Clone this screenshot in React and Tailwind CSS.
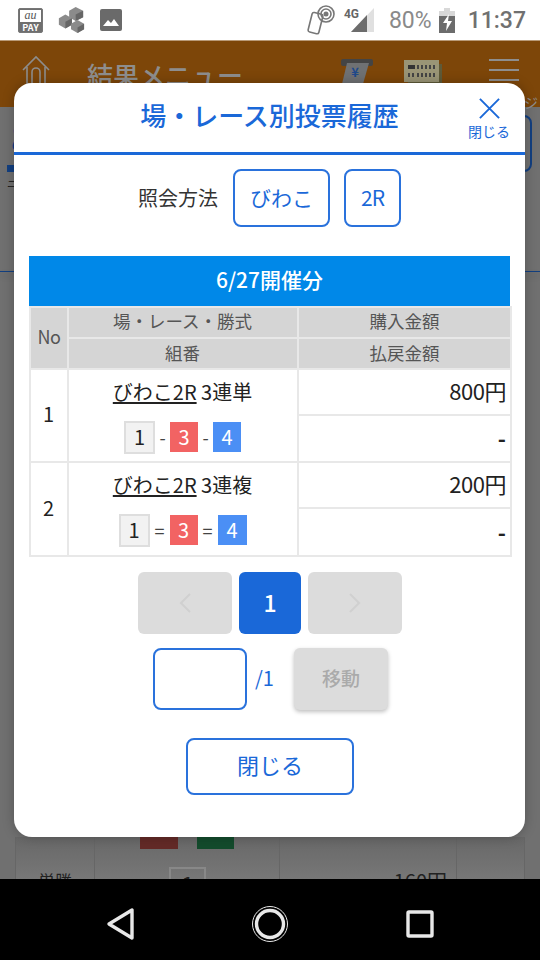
function Combo({ sep, gap1, blueW }) {
  return (
    <div className="flex items-center justify-center h-[34px]">
      <span className="flex items-center justify-center h-[33px] w-[31px] bg-[#f2f2f2] border-2 border-[#dedede] text-[20px] text-[#222]">1</span>
      <span className={`${gap1} text-center text-[18px] text-[#444]`}>{sep}</span>
      <span className="flex items-center justify-center h-[30px] w-[28px] bg-[#f26363] text-white text-[20px]">3</span>
      <span className={`${gap1} text-center text-[18px] text-[#444]`}>{sep}</span>
      <span className={`flex items-center justify-center h-[30px] ${blueW} bg-[#4b8ff5] text-white text-[20px]`}>4</span>
    </div>
  );
}

function Row({ no, kind, amount, sep, gap1, blueW, lastH }) {
  return (
    <>
      <tr className="h-[46px]">
        <td rowSpan={2} className="border-2 border-[#e8e8e8] text-center text-[20px] text-[#222] pb-[3px] pr-[1px]">{no}</td>
        <td rowSpan={2} className="border-2 border-[#e8e8e8] text-center text-[#222] align-top pr-[1px]">
          <div className="text-[20px] leading-[26px] mt-[9px] mb-[15px]"><span className="underline underline-offset-2">びわこ2R</span> {kind}</div>
          <Combo sep={sep} gap1={gap1} blueW={blueW} />
        </td>
        <td className="border-2 border-[#e8e8e8] text-right pr-[4px] pb-[5px] text-[22px] leading-none text-[#222] tracking-[-0.5px]">{amount}</td>
      </tr>
      <tr className={lastH}>
        <td className="border-2 border-[#e8e8e8] text-right pr-[4px] pb-[2px] text-[22px] font-bold text-[#222]">-</td>
      </tr>
    </>
  );
}

function StatusBar() {
  return (
    <div className="h-[40px] bg-white flex items-center shrink-0 pl-[18px] pr-[14px]">
      <div className="w-[25px] h-[25px] rounded-[2px] bg-[#6f6f6f] flex flex-col items-center overflow-hidden border border-[#777]">
        <div className="h-[12px] w-[21px] mt-[1px] bg-white text-[#555] text-[12px] leading-[11px] italic text-center" style={{ fontFamily: '"Liberation Serif", serif' }}>au</div>
        <div className="text-white text-[9px] leading-[9px] mt-[1px] font-bold">PAY</div>
      </div>
      <svg width="28" height="30" viewBox="0 0 30 30" className="ml-[14px]">
        <path d="M20 1l8 4v7l-8 4-7-4V5z" fill="#8b8b8b" /><path d="M20 9l8-4v7l-8 4z" fill="#666" />
        <path d="M9 9l7 4v7l-7 4-7-4v-7z" fill="#8b8b8b" /><path d="M9 17l7-4v7l-7 4z" fill="#666" />
        <path d="M22 15l7 4v6l-7 4-7-4v-6z" fill="#8b8b8b" /><path d="M22 23l7-4v6l-7 4z" fill="#666" />
      </svg>
      <svg width="22" height="22" viewBox="0 0 22 22" className="ml-[15px]">
        <rect width="22" height="22" rx="2" fill="#6a6a6a" />
        <path d="M3 17l5-6 3 3 3-4 5 7z" fill="#fff" />
      </svg>
      <div className="flex-1" />
      <svg width="30" height="30" viewBox="0 0 30 30" fill="none" stroke="#777" strokeWidth="1.6">
        <rect x="4" y="8" width="11" height="20" rx="2" transform="rotate(14 9 18)" />
        <circle cx="20" cy="9" r="2.5" fill="#777" stroke="none" />
        <circle cx="20" cy="9" r="5" /><circle cx="20" cy="9" r="8" />
      </svg>
      <div className="relative w-[30px] h-[26px] ml-[8px]">
        <span className="absolute left-0 top-0 text-[12px] leading-[14px] font-bold text-[#666]" style={{ fontFamily: '"Roboto", sans-serif' }}>4G</span>
        <svg width="23" height="24" viewBox="0 0 23 24" className="absolute left-[7px] top-[1px]">
          <path d="M0 24L23 0v24z" fill="#e0e0e0" /><path d="M0 24L16 7v17z" fill="#6c6c6c" />
        </svg>
      </div>
      <span className="ml-[15px] text-[23px] leading-none text-[#8a8a8a]" style={{ fontFamily: '"Roboto", sans-serif' }}>80%</span>
      <svg width="16" height="25" viewBox="0 0 16 25" className="ml-[7px]">
        <rect x="5" y="0" width="6" height="3" fill="#d8d8d8" />
        <rect x="0" y="3" width="16" height="5" fill="#d8d8d8" />
        <rect x="0" y="8" width="16" height="17" fill="#6c6c6c" />
        <path d="M10 6L4 15h4l-1 8 6-10H9z" fill="#fff" />
      </svg>
      <span className="ml-[13px] text-[23px] leading-none text-[#707070] font-medium" style={{ fontFamily: '"Roboto", sans-serif' }}>11:37</span>
    </div>
  );
}

function PageBehind() {
  return (
    <div className="flex-1 flex flex-col min-h-0 bg-[#707070] overflow-hidden">
      <div className="relative h-[67px] shrink-0 bg-[#7d4609] border-t border-[#b99a78] flex items-center pl-[22px] pr-[21px]">
        <svg width="28" height="30" viewBox="0 0 28 30" fill="none" stroke="#8d8d8d" strokeWidth="1.6" className="mb-[9px]">
          <path d="M1 15L14 2l13 13" /><path d="M5 12v17h18V12" /><path d="M10 29V17a4 4 0 0 1 8 0v12" />
        </svg>
        <span className="ml-[37px] mt-[1px] text-[26px] leading-none text-[#8e8e8e] font-medium">結果メニュー</span>
        <div className="flex-1" />
        <svg width="34" height="28" viewBox="0 0 34 28" className="mb-[5px]">
          <rect x="1" y="1" width="32" height="7" rx="2" fill="#444" />
          <path d="M7 5h22l-6 21H2z" fill="#6f7173" />
          <text x="15" y="19" fontSize="13" fontWeight="bold" fill="#1f4a8c" textAnchor="middle">¥</text>
        </svg>
        <svg width="38" height="26" viewBox="0 0 38 26" className="ml-[30px] mb-[3px]">
          <rect x="4" y="4" width="34" height="22" fill="#5e5a38" />
          <rect x="0" y="0" width="35" height="22" fill="#9a9576" />
          <rect x="4" y="5" width="7" height="4" fill="#333" />
          <path d="M14 5v4M18 5v4M22 5v4M26 5v4M30 5v4M5 13v4M9 13v4M14 13v4M18 13v4M22 13v4M26 13v4M30 13v4" stroke="#444" strokeWidth="2" />
        </svg>
        <div className="ml-[47px] w-[30px] mb-[8px] flex flex-col gap-[8px]">
          <div className="h-[2px] bg-[#8e8e8e]" /><div className="h-[2px] bg-[#8e8e8e]" /><div className="h-[2px] bg-[#8e8e8e]" />
        </div>
        <span className="absolute right-[2px] bottom-[-2px] text-[14px] leading-none text-[#8e8e8e]">ジ</span>
      </div>
      <div className="flex justify-between h-[64px] shrink-0">
        <div className="pt-[13px] pl-[10px]">
          <div className="text-[28px] leading-[36px] text-[#123f80] font-bold">あ</div>
        </div>
        <div className="mt-[8px] mr-[8px] w-[60px] h-[57px] border-2 border-[#123f80] rounded-[8px]" />
      </div>
      <div className="pl-[7px] flex flex-col">
        <div className="w-[20px] h-[7px] bg-[#123f80] mt-[-6px]" />
        <div className="w-[20px] text-[10px] leading-[10px] text-[#111] mt-[7px]">ニ</div>
      </div>
      <div className="h-[1px] bg-[#123f80] mt-[82px] shadow-[0_4px_6px_rgba(0,0,0,0.2)]" />
      <div className="flex-1" />
      <div className="h-[42px] shrink-0 mx-[15px] flex bg-gradient-to-b from-[#686868] to-[#777] border-x border-[#666]">
        <div className="w-[79px] border-r border-[#666] flex items-end justify-center">
          <span className="text-[17px] leading-none mb-[-10px] text-[#222]">単勝</span>
        </div>
        <div className="w-[185px] border-r border-[#666] flex flex-col">
          <div className="flex gap-[19px] h-[12px] ml-[45px] shrink-0">
            <div className="w-[38px] bg-[#632a27]" />
            <div className="w-[37px] bg-[#134b2c]" />
          </div>
          <div className="mt-[18px] ml-[74px] w-[37px] h-[30px] shrink-0 border-2 border-[#888] text-center text-[18px] font-bold text-[#222]">1</div>
        </div>
        <div className="w-[177px] border-r border-[#666] flex items-end justify-end pr-[9px]">
          <span className="text-[20px] leading-none mb-[-12px] text-[#222]">160円</span>
        </div>
        <div className="flex-1" />
      </div>
    </div>
  );
}

function Modal() {
  const blue = "text-[#1a68d8]";
  const outline = "border-2 border-[#2a72dc] rounded-[8px] bg-white";
  return (
    <div className="absolute left-[14px] top-[83px] w-[511px] h-[754px] bg-white rounded-[18px] flex flex-col shadow-[0_0_12px_rgba(0,0,0,0.25)]">
      <div className="relative h-[72px] shrink-0 border-b-[3px] border-[#1a68d8] flex items-center justify-center">
        <h1 className={`text-[26px] leading-none font-medium mb-[6px] ${blue}`}>場・レース別投票履歴</h1>
        <div className={`absolute right-[14px] top-[14px] w-[44px] flex flex-col items-center ${blue}`}>
          <svg width="23" height="23" viewBox="0 0 24 24" stroke="#1a68d8" strokeWidth="2" fill="none">
            <path d="M2 2l20 20M22 2L2 22" />
          </svg>
          <span className="text-[14px] leading-none mt-[4px] whitespace-nowrap">閉じる</span>
        </div>
      </div>
      <div className="flex items-center justify-center mt-[14px] h-[58px]">
        <span className="text-[20px] text-[#333] mr-[15px]">照会方法</span>
        <div className={`w-[97px] h-[58px] flex items-center justify-center text-[21px] ${blue} ${outline}`}>びわこ</div>
        <div className={`ml-[14px] w-[57px] h-[58px] flex items-center justify-center text-[21px] tracking-[-1px] ${blue} ${outline}`}>2R</div>
      </div>
      <div className="mx-[15px] mt-[29px]">
        <div className="h-[50px] bg-[#0088e8] text-white text-[21px] font-medium flex items-center justify-center pb-[3px]">6/27開催分</div>
        <table className="w-[481px] table-fixed border-collapse">
          <colgroup><col className="w-[38px]" /><col className="w-[230px]" /><col className="w-[213px]" /></colgroup>
          <thead className="bg-[#d5d5d5] text-[#555] text-[17.5px]">
            <tr className="h-[31px]">
              <th rowSpan={2} className="border-2 border-[#e8e8e8] font-normal text-[18px] pb-[3px]"><span className="tracking-[-0.5px]">No</span></th>
              <th className="border-2 border-[#e8e8e8] font-normal pb-[3px] pr-[1px]">場・レース・勝式</th>
              <th className="border-2 border-[#e8e8e8] font-normal pb-[3px]">購入金額</th>
            </tr>
            <tr className="h-[31px]">
              <th className="border-2 border-[#e8e8e8] font-normal pb-[2px] pr-[1px]">組番</th>
              <th className="border-2 border-[#e8e8e8] font-normal pb-[2px]">払戻金額</th>
            </tr>
          </thead>
          <tbody>
            <Row no="1" kind="3連単" amount="800円" sep="-" gap1="w-[15px]" blueW="w-[28px]" lastH="h-[47px]" />
            <Row no="2" kind="3連複" amount="200円" sep="=" gap1="w-[20px]" blueW="w-[29px]" lastH="h-[48px]" />
          </tbody>
        </table>
      </div>
      <div className="flex justify-center gap-[7px] mt-[15px] ml-[1px]">
        <div className="w-[94px] h-[62px] rounded-[6px] bg-[#dcdcdc] flex items-center justify-center">
          <svg width="14" height="22" viewBox="0 0 14 22" fill="none" stroke="#d0d0d0" strokeWidth="2"><path d="M12 2L3 11l9 9" /></svg>
        </div>
        <div className="w-[62px] h-[62px] rounded-[6px] bg-[#1a68d8] text-white text-[23px] font-medium flex items-center justify-center pb-[2px]">1</div>
        <div className="w-[94px] h-[62px] rounded-[6px] bg-[#dcdcdc] flex items-center justify-center">
          <svg width="14" height="22" viewBox="0 0 14 22" fill="none" stroke="#d0d0d0" strokeWidth="2"><path d="M2 2l9 9-9 9" /></svg>
        </div>
      </div>
      <div className="flex items-center ml-[139px] mt-[14px]">
        <div className="w-[94px] h-[62px] rounded-[8px] border-2 border-[#2a72dc] bg-white" />
        <span className={`ml-[8px] w-[39px] text-[20px] mb-[2px] ${blue}`}>/1</span>
        <div className="w-[94px] h-[62px] rounded-[6px] bg-[#dcdcdc] text-[#aaa] text-[19px] font-medium flex items-center justify-center pb-[3px] shadow-[0_2px_4px_rgba(0,0,0,0.25)]">移動</div>
      </div>
      <div className={`ml-[172px] mt-[28px] w-[168px] h-[57px] flex items-center justify-center text-[22px] pb-[4px] ${blue} ${outline}`}>閉じる</div>
    </div>
  );
}

function NavBar() {
  return (
    <div className="h-[81px] bg-black shrink-0 flex items-center pl-[105px] pt-[9px]">
      <svg width="32" height="34" viewBox="0 0 32 34" fill="none" stroke="#e8e8e8" strokeWidth="3.4" strokeLinejoin="round"><path d="M27 3v28L4 17z" /></svg>
      <svg width="38" height="38" viewBox="0 0 38 38" fill="none" className="ml-[114px]"><circle cx="19" cy="19" r="17.5" stroke="#e8e8e8" strokeWidth="1" /><circle cx="19" cy="19" r="13.5" stroke="#e8e8e8" strokeWidth="3.4" /></svg>
      <svg width="28" height="28" viewBox="0 0 28 28" fill="none" stroke="#e8e8e8" strokeWidth="3.4" strokeLinejoin="round" className="ml-[117px]"><rect x="2" y="2" width="24" height="24" rx="1" /></svg>
    </div>
  );
}

export default function App() {
  return (
    <div className="relative w-[540px] h-[960px] overflow-hidden flex flex-col bg-white" style={{ fontFamily: '"Noto Sans CJK JP", "Noto Sans", sans-serif' }}>
      <StatusBar />
      <PageBehind />
      <NavBar />
      <Modal />
    </div>
  );
}
